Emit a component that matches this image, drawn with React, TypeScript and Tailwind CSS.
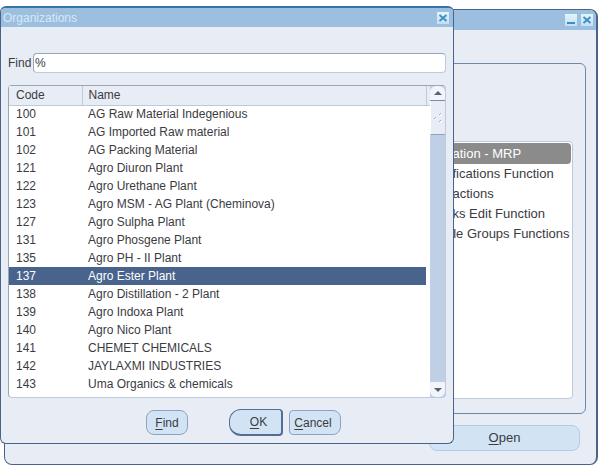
import type { ReactNode } from "react";

const organizations = [
  ["100", "AG Raw Material Indegenious"],
  ["101", "AG Imported Raw material"],
  ["102", "AG Packing Material"],
  ["121", "Agro Diuron Plant"],
  ["122", "Agro Urethane Plant"],
  ["123", "Agro MSM - AG Plant (Cheminova)"],
  ["127", "Agro Sulpha Plant"],
  ["131", "Agro Phosgene Plant"],
  ["135", "Agro PH - II Plant"],
  ["137", "Agro Ester Plant"],
  ["138", "Agro Distillation - 2 Plant"],
  ["139", "Agro Indoxa Plant"],
  ["140", "Agro Nico Plant"],
  ["141", "CHEMET CHEMICALS"],
  ["142", "JAYLAXMI INDUSTRIES"],
  ["143", "Uma Organics & chemicals"],
];

const functions = [
  "cation - MRP",
  "tifications Function",
  "sactions",
  "cks Edit Function",
  "ble Groups Functions",
];

function TitleButton({ label, children }: { label: string; children: ReactNode }) {
  return (
    <button
      type="button"
      aria-label={label}
      className="flex size-3 items-center justify-center bg-gradient-to-b from-[#e3f4fd] to-[#bfe0f5]"
    >
      <svg viewBox="0 0 12 12" className="size-3" fill="none" stroke="#3f8cc0" strokeWidth="1.8">
        {children}
      </svg>
    </button>
  );
}

function CloseButton() {
  return (
    <TitleButton label="Close">
      <path d="M2.5 3 9.5 9M9.5 3 2.5 9" />
    </TitleButton>
  );
}

function Navigator() {
  return (
    <main className="ml-1 mr-px flex flex-col overflow-hidden rounded-lg border border-r-2 border-[#4a6489] bg-[#e8edf5]">
      <header className="flex h-5 items-center justify-end gap-1 bg-[#9dbfdf] pr-[3px]">
        <TitleButton label="Minimize">
          <path d="M2 9h8" />
        </TitleButton>
        <CloseButton />
      </header>
      <section className="mt-[33px] mr-2.5 ml-2 flex h-[351px] flex-col rounded-md border border-[#6d88ab] px-3 pt-[77px] pb-[14px]">
        <ul className="flex-1 rounded border border-[#bccadd] bg-white pt-px text-[13px]">
          {functions.map((name, index) => (
            <li
              key={name}
              className={
                index === 0
                  ? "mr-px h-[21px] rounded-sm bg-[#8b8b8b] pl-[419px] leading-[21px] whitespace-nowrap text-white"
                  : "h-5 pl-[419px] leading-5 whitespace-nowrap"
              }
            >
              {name}
            </li>
          ))}
        </ul>
      </section>
      <footer className="flex justify-end pt-[11px] pr-4 pb-[13px]">
        <button
          type="button"
          className="h-[26px] w-[151px] rounded-lg border border-[#b3cbe4] bg-[#d2e3f3] text-[13px]"
        >
          <u className="underline-offset-2">O</u>pen
        </button>
      </footer>
    </main>
  );
}

function ScrollBar() {
  return (
    <div className="flex w-[15px] flex-col justify-between bg-[#bfd0e6]">
      <div>
        <button
          type="button"
          aria-label="Scroll up"
          className="flex h-[15px] w-full items-center justify-center rounded-t-md border-b border-[#7f8a9c] bg-[#f1f4f9]"
        >
          <svg viewBox="0 0 8 4" className="h-1 w-2" fill="#5d6070">
            <path d="M0 4 4 0 8 4Z" />
          </svg>
        </button>
        <div className="flex h-[34px] items-center justify-center border-b border-l border-b-[#8ba3c3] border-l-white bg-[#e8edf5]">
          <svg viewBox="0 0 8 10" className="h-2.5 w-2" stroke="#a2afc0" fill="none">
            <path d="m5 2 2-2M0 6l2-2M5 9l2-2" />
            <path d="m6 3 2-2M1 7l2-2M6 10l2-2" stroke="#fff" />
          </svg>
        </div>
      </div>
      <button
        type="button"
        aria-label="Scroll down"
        className="flex h-[15px] w-full items-center justify-center rounded-b-md bg-[#f1f4f9]"
      >
        <svg viewBox="0 0 8 4" className="h-1 w-2" fill="#5d6070">
          <path d="M0 0h8L4 4Z" />
        </svg>
      </button>
    </div>
  );
}

function OrganizationsDialog() {
  return (
    <div
      role="dialog"
      aria-labelledby="dialog-title"
      className="absolute top-1.5 left-0 w-[454px] overflow-hidden rounded-md border border-t-2 border-[#4a6489] border-t-[#3674a6] bg-[#e8edf5]"
    >
      <header className="flex h-[19px] items-center justify-between bg-[#9dbfdf] pr-1 pl-0.5">
        <h1 id="dialog-title" className="text-xs text-[#d5e8f7]">
          Organizations
        </h1>
        <CloseButton />
      </header>
      <div className="flex items-center px-[7px] pt-[26px]">
        <label htmlFor="find" className="w-[25px] text-xs">
          Find
        </label>
        <input
          id="find"
          defaultValue="%"
          className="h-5 min-w-0 flex-1 rounded-sm border border-t-[#9aa5b5] border-r-[#bccadd] border-b-[#bccadd] border-l-[#9aa5b5] bg-white px-px text-xs outline-none"
        />
      </div>
      <div className="mx-[7px] mt-3 flex h-[313px] rounded-sm border border-t-[#9aa5b5] border-r-[#bccadd] border-b-[#bccadd] border-l-[#9aa5b5] bg-white">
        <div className="min-w-0 flex-1">
          <table className="w-full table-fixed border-collapse text-left text-xs">
            <colgroup>
              <col className="w-[73px]" />
              <col />
              <col className="w-1" />
            </colgroup>
            <thead>
              <tr className="h-[19px] bg-[#e8edf5]">
                <th className="border-r border-b border-[#bccadd] p-0 pl-[7px] font-normal">Code</th>
                <th className="border-r border-b border-[#bccadd] p-0 pl-1.5 font-normal">Name</th>
                <td className="border-b border-[#bccadd] p-0" />
              </tr>
            </thead>
            <tbody>
              {organizations.map(([code, name]) => (
                <tr key={code} className={code === "137" ? "h-[18px] text-white" : "h-[18px]"}>
                  <td className={code === "137" ? "bg-[#48638c] p-0 pl-[7px]" : "p-0 pl-[7px]"}>{code}</td>
                  <td className={code === "137" ? "bg-[#48638c] p-0 pl-1.5" : "p-0 pl-1.5"}>{name}</td>
                  <td className="p-0" />
                </tr>
              ))}
            </tbody>
          </table>
        </div>
        <ScrollBar />
      </div>
      <footer className="flex items-center justify-center pt-[11px] pb-[7px] pl-[33px]">
        <button
          type="button"
          className="mr-[41px] h-[25px] w-[42px] rounded-lg border border-[#8ba3c3] bg-[#d2e3f3] text-xs"
        >
          <u className="underline-offset-2">F</u>ind
        </button>
        <button
          type="button"
          className="mr-1.5 h-[27px] w-[54px] rounded-l-xl rounded-r-sm border border-r-2 border-b-2 border-[#526d96] bg-[#d2e3f3] pl-1.5 text-xs"
        >
          <u className="underline-offset-2">O</u>K
        </button>
        <button
          type="button"
          className="h-[25px] w-[52px] rounded-l-sm rounded-r-lg border border-[#8ba3c3] bg-[#d2e3f3] pr-1 text-xs"
        >
          <u className="underline-offset-2">C</u>ancel
        </button>
      </footer>
    </div>
  );
}

export default function App() {
  return (
    <div className="relative min-h-screen bg-white pt-[9px] font-['Liberation_Sans',Arial,sans-serif] text-[#3b3b42]">
      <Navigator />
      <OrganizationsDialog />
    </div>
  );
}
